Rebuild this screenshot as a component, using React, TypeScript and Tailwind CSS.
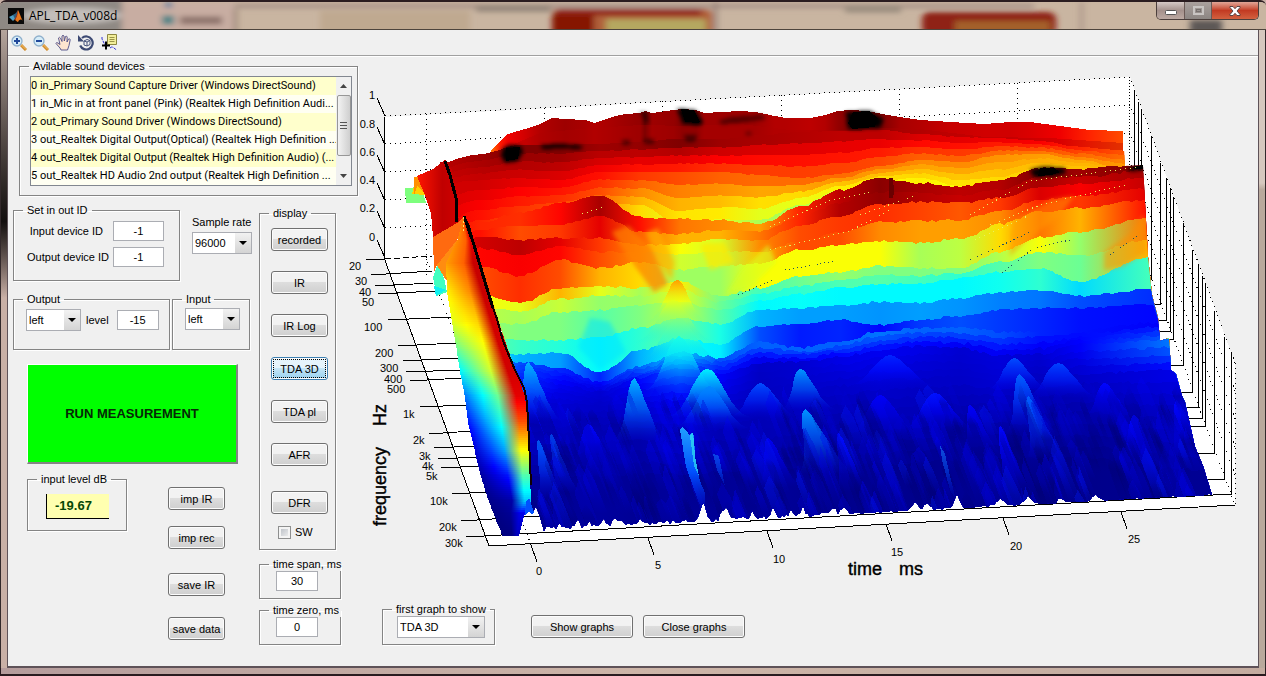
import { useState, type ReactNode } from 'react';
import clsx from 'clsx';

/* ---------- 3D plot data ---------- */

type Ridge = { y: number[]; v: number[]; end: number };
type Point = [number, number];

// x knots shared by every ridge, the last one is replaced by ridge.end
const KNOTS = [440, 480, 520, 560, 600, 640, 680, 720, 760, 800, 840, 880, 920, 960, 1000, 1040, 1080];

const clamp = (n: number) => Math.max(0, Math.min(1, n));

// jet colormap, values above 1 fade to black
function jet(v: number) {
  const dark = v > 1 ? clamp(1 - (v - 1) * 10) : 1;
  const t = Math.min(v, 1);
  const c = [3, 2, 1].map((k) => Math.round(255 * dark * clamp(1.5 - Math.abs(4 * t - k))));
  return `rgb(${c.join(',')})`;
}

function makeRandom(seed: number) {
  let s = seed;
  return () => {
    s = (s * 16807) % 2147483647;
    return s / 2147483647;
  };
}

const BACK: Ridge[] = [
  { end: 1125, y: [162, 154, 145, 145, 144, 142, 139, 139, 135, 132, 131, 130, 134, 137, 138, 141, 147, 151], v: [0.94, 0.97, 1, 1, 0.97, 0.98, 1, 0.97, 0.96, 0.95, 0.94, 0.94, 0.91, 0.9, 0.89, 0.88, 0.84, 0.79] },
  { end: 1125, y: [185, 180, 178, 180, 172, 172, 172, 172, 175, 178, 174, 166, 160, 162, 155, 154, 160, 168], v: [0.92, 0.92, 0.9, 0.88, 0.86, 0.82, 0.8, 0.78, 0.77, 0.77, 0.77, 0.76, 0.74, 0.74, 0.73, 0.72, 0.71, 0.7] },
  { end: 1127, y: [235, 220, 215, 210, 203, 205, 224, 219, 220, 205, 190, 180, 178, 186, 184, 172, 172, 170], v: [0.88, 0.84, 0.8, 0.78, 0.74, 0.66, 0.6, 0.6, 0.54, 0.55, 0.6, 0.62, 0.64, 0.62, 0.64, 0.66, 0.66, 0.7] },
];

const MIDDLE: Ridge[] = [
  { end: 1143, y: [240, 222, 213, 203, 196, 217, 219, 220, 224, 207, 190, 178, 183, 186, 180, 168, 169, 165], v: [0.88, 0.84, 0.83, 0.87, 0.96, 0.86, 0.76, 0.74, 0.72, 0.84, 0.94, 0.99, 0.96, 0.94, 0.95, 1, 0.97, 1] },
  { end: 1143, y: [248, 230, 226, 225, 216, 232, 234, 230, 231, 217, 203, 192, 193, 195, 190, 177, 177, 171], v: [0.87, 0.86, 0.8, 0.82, 0.9, 0.78, 0.7, 0.7, 0.76, 0.84, 0.95, 0.98, 0.95, 0.93, 0.94, 0.96, 0.93, 0.96] },
  { end: 1144, y: [255, 237, 240, 238, 238, 245, 244, 239, 240, 226, 216, 204, 202, 203, 198, 187, 184, 178], v: [0.88, 0.92, 0.94, 0.9, 0.82, 0.74, 0.62, 0.58, 0.74, 0.8, 0.82, 0.83, 0.81, 0.79, 0.82, 0.91, 0.88, 0.93] },
  { end: 1145, y: [263, 248, 255, 246, 252, 252, 254, 252, 252, 241, 232, 222, 221, 220, 211, 200, 196, 189], v: [0.82, 0.87, 0.88, 0.87, 0.8, 0.74, 0.58, 0.56, 0.69, 0.8, 0.8, 0.74, 0.72, 0.72, 0.74, 0.84, 0.82, 0.9] },
  { end: 1146, y: [274, 266, 276, 260, 268, 262, 270, 266, 264, 250, 245, 241, 243, 239, 224, 212, 208, 200], v: [0.78, 0.8, 0.83, 0.8, 0.7, 0.66, 0.53, 0.53, 0.62, 0.62, 0.62, 0.62, 0.54, 0.56, 0.66, 0.76, 0.7, 0.86] },
  { end: 1147, y: [290, 294, 303, 288, 286, 288, 281, 296, 288, 276, 272, 266, 268, 268, 252, 237, 232, 218], v: [0.64, 0.62, 0.6, 0.7, 0.6, 0.54, 0.64, 0.49, 0.44, 0.48, 0.52, 0.5, 0.5, 0.5, 0.55, 0.62, 0.52, 0.76] },
  { end: 1147, y: [304, 306, 312, 299, 296, 296, 290, 302, 294, 286, 280, 275, 276, 273, 262, 252, 256, 240], v: [0.58, 0.56, 0.54, 0.57, 0.52, 0.53, 0.6, 0.48, 0.4, 0.42, 0.45, 0.46, 0.44, 0.42, 0.46, 0.5, 0.48, 0.7] },
  { end: 1148, y: [320, 322, 324, 312, 310, 305, 302, 310, 301, 294, 288, 284, 284, 278, 272, 268, 282, 257], v: [0.55, 0.53, 0.5, 0.5, 0.46, 0.5, 0.57, 0.46, 0.37, 0.38, 0.37, 0.37, 0.37, 0.37, 0.39, 0.42, 0.34, 0.44] },
  { end: 1151, y: [334, 337, 340, 340, 337, 328, 318, 324, 310, 308, 305, 302, 303, 298, 292, 290, 296, 289], v: [0.5, 0.48, 0.43, 0.41, 0.37, 0.42, 0.48, 0.4, 0.3, 0.28, 0.28, 0.27, 0.28, 0.27, 0.25, 0.24, 0.2, 0.17] },
  { end: 1153, y: [346, 354, 354, 352, 373, 350, 338, 344, 326, 324, 320, 325, 320, 316, 310, 308, 308, 304], v: [0.4, 0.38, 0.3, 0.28, 0.16, 0.3, 0.38, 0.36, 0.2, 0.15, 0.16, 0.13, 0.18, 0.2, 0.18, 0.16, 0.14, 0.13] },
];

const FRONT: Ridge[] = [
  { end: 1158, y: [360, 366, 362, 368, 382, 366, 352, 358, 342, 348, 342, 331, 328, 328, 332, 332, 330, 322], v: [0.32, 0.3, 0.2, 0.16, 0.12, 0.22, 0.32, 0.2, 0.22, 0.22, 0.22, 0.24, 0.22, 0.22, 0.2, 0.16, 0.14, 0.12] },
  { end: 1169, y: [375, 380, 376, 384, 392, 378, 368, 374, 363, 362, 357, 350, 346, 348, 356, 354, 344, 340], v: [0.28, 0.24, 0.16, 0.11, 0.08, 0.13, 0.2, 0.12, 0.07, 0.08, 0.1, 0.11, 0.1, 0.08, 0.09, 0.08, 0.12, 0.24] },
  { end: 1174, y: [400, 402, 398, 404, 405, 402, 400, 402, 396, 392, 386, 380, 378, 376, 382, 380, 374, 370], v: [0.18, 0.15, 0.1, 0.08, 0.07, 0.08, 0.12, 0.08, 0.06, 0.07, 0.07, 0.08, 0.07, 0.07, 0.08, 0.06, 0.07, 0.1] },
  { end: 1190, y: [430, 432, 430, 434, 430, 428, 432, 430, 428, 424, 424, 418, 416, 414, 410, 414, 412, 418], v: [0.1, 0.09, 0.07, 0.06, 0.05, 0.05, 0.08, 0.05, 0.05, 0.06, 0.04, 0.05, 0.05, 0.04, 0.05, 0.03, 0.04, 0.06] },
  { end: 1204, y: [480, 478, 476, 476, 476, 474, 474, 472, 470, 468, 466, 464, 462, 460, 458, 458, 458, 470], v: [0.05, 0.04, 0.03, 0.02, 0.03, 0.02, 0.03, 0.02, 0.03, 0.02, 0.01, 0.02, 0.01, 0.02, 0.01, 0, 0.01, 0.02] },
];

// Outline of the very first ridge
const TOP_LINE: [number, number, number][] = [
  [485, 158, 0.74], [491, 151, 0.76], [500, 141, 0.85], [508, 134, 0.89], [525, 129, 0.92], [540, 124, 0.95],
  [552, 118, 0.96], [565, 119, 0.97], [585, 120, 0.96], [594, 123, 0.95], [612, 117, 0.96], [625, 114, 0.97],
  [640, 113, 0.98], [645, 111, 1.02], [652, 113, 0.97], [674, 110, 0.98], [682, 109, 1], [696, 110, 1],
  [704, 113, 0.97], [740, 111, 0.97], [755, 112, 0.97], [775, 116, 0.95], [785, 118, 0.95], [810, 118, 0.94],
  [825, 115, 0.95], [838, 111, 0.98], [850, 110, 1], [868, 111, 1], [882, 114, 1], [900, 117, 0.96],
  [920, 120, 0.95], [950, 122, 0.93], [985, 124, 0.92], [1010, 122, 0.92], [1030, 122, 0.91], [1060, 126, 0.89],
  [1090, 130, 0.84], [1123, 131, 0.8],
];

function mixRidge(a: Ridge, b: Ridge, t: number): Ridge {
  const mix = (p: number, q: number) => p + (q - p) * t;
  return { end: mix(a.end, b.end), y: a.y.map((p, i) => mix(p, b.y[i])), v: a.v.map((p, i) => mix(p, b.v[i])) };
}

function expand(ridges: Ridge[], steps: number) {
  return ridges.flatMap((ridge, i) =>
    i === ridges.length - 1
      ? [ridge]
      : Array.from({ length: steps }, (_, k) => mixRidge(ridge, ridges[i + 1], k / steps)),
  );
}

function ridgePoints(ridge: Ridge, roughness: number, seed: number) {
  const random = makeRandom(seed);
  const xs = [...KNOTS, ridge.end];
  const points: Point[] = [];
  for (let i = 0; i < xs.length - 1; i++) {
    for (let x = xs[i]; x < xs[i + 1]; x += 4) {
      const t = (x - xs[i]) / (xs[i + 1] - xs[i]);
      const s = t * t * (3 - 2 * t);
      points.push([x, Math.round(ridge.y[i] + (ridge.y[i + 1] - ridge.y[i]) * s + (random() - 0.5) * roughness)]);
    }
  }
  points.push([ridge.end, ridge.y[ridge.y.length - 1]]);
  return points;
}

const toText = (points: Point[]) => points.map((p) => p.join(',')).join(' ');

function RidgeShape({ ridge, id, roughness = 1 }: { ridge: Ridge; id: string; roughness?: number }) {
  const xs = [...KNOTS, ridge.end];
  const points = ridgePoints(ridge, roughness, id.length * 131 + Math.round(ridge.y[3] * 7));
  return (
    <>
      <linearGradient id={id} gradientUnits="userSpaceOnUse" x1="440" x2={ridge.end}>
        {xs.map((x, i) => (
          <stop key={x} offset={(x - 440) / (ridge.end - 440)} stopColor={jet(ridge.v[i])} />
        ))}
      </linearGradient>
      <polygon points={`${toText(points)} 1230,540 440,540`} fill={`url(#${id})`} />
    </>
  );
}

// y, left x, right x, then the level at the left, middle and right
const SLOPE = [
  [218, 463, 465, 0.75, 0.8, 0.9],
  [240, 457, 473, 0.74, 0.78, 0.9],
  [262, 446, 478, 0.72, 0.78, 0.93],
  [290, 447, 488, 0.64, 0.74, 0.93],
  [320, 452, 498, 0.6, 0.67, 0.92],
  [343, 456, 506, 0.5, 0.62, 0.92],
  [370, 460, 516, 0.37, 0.58, 0.92],
  [395, 465, 525, 0.24, 0.48, 0.9],
  [420, 468, 528, 0.15, 0.4, 0.8],
  [450, 475, 529, 0.08, 0.28, 0.62],
  [475, 481, 530, 0.03, 0.14, 0.45],
  [500, 489, 531, 0.01, 0.04, 0.32],
  [513, 494, 524, 0, 0.02, 0.1],
  [535, 503, 519, 0, 0, 0.06],
];

function Slope() {
  const strips: number[][] = [];
  for (let i = 0; i < SLOPE.length - 1; i++) {
    const a = SLOPE[i];
    const b = SLOPE[i + 1];
    for (let y = a[0]; y < b[0]; y += 2) {
      const t = (y - a[0]) / (b[0] - a[0]);
      strips.push(a.map((n, k) => n + (b[k] - n) * t));
    }
  }
  return (
    <>
      {strips.map(([y, x1, x2, left, middle, right]) => (
        <g key={y}>
          <linearGradient id={`slope${Math.round(y)}`}>
            <stop offset="0" stopColor={jet(left)} />
            <stop offset=".3" stopColor={jet(left + (middle - left) * 0.55)} />
            <stop offset=".55" stopColor={jet(middle)} />
            <stop offset=".85" stopColor={jet(right)} />
            <stop offset="1" stopColor={jet(right)} />
          </linearGradient>
          <rect x={x1} y={y} width={x2 - x1} height="3" fill={`url(#slope${Math.round(y)})`} />
        </g>
      ))}
    </>
  );
}

// peak x, peak y, half width, height, level, lean
const HUMPS = [
  [677, 280, 34, 44, 0.72, 0], [673, 300, 44, 44, 0.6, 2], [678, 318, 46, 44, 0.5, 2], [679, 336, 40, 56, 0.4, 2],
  [528, 362, 26, 60, 0.3, 10], [634, 378, 28, 64, 0.3, 6], [707, 369, 46, 50, 0.36, 2], [709, 386, 42, 44, 0.26, 2],
  [760, 383, 40, 36, 0.2, 4], [800, 369, 30, 42, 0.27, 8], [890, 355, 52, 34, 0.16, 2], [805, 409, 30, 66, 0.27, 22],
  [935, 393, 44, 40, 0.14, 4], [880, 395, 40, 40, 0.12, 4], [1014, 358, 36, 34, 0.2, 4], [1019, 374, 28, 60, 0.22, 12],
  [1058, 363, 42, 36, 0.19, 4], [1028, 396, 22, 64, 0.22, 20], [1104, 383, 30, 36, 0.13, 6], [1134, 415, 24, 50, 0.13, 6],
  [551, 434, 14, 60, 0.2, 16], [538, 440, 14, 60, 0.22, 14], [1176, 400, 22, 60, 0.13, 14],
  [768, 438, 24, 50, 0.11, 12], [838, 433, 18, 60, 0.13, 16], [1000, 426, 18, 70, 0.13, 18],
  [588, 424, 26, 40, 0.13, 6], [970, 405, 22, 50, 0.12, 12],
];

function Hump({ hump, index }: { hump: number[]; index: number }) {
  const [x, y, half, height, level, lean] = hump;
  const side = (sign: number) =>
    Array.from({ length: 13 }, (_, k): Point => {
      const t = k / 12;
      const drop = 1 - Math.exp(-4 * t * t);
      return [Math.round(x + sign * half * t + lean * drop), Math.round(y + height * drop)];
    });
  return (
    <>
      <linearGradient id={`hump${index}`} x2="0" y2="1">
        <stop offset="0" stopColor={jet(level)} />
        <stop offset=".5" stopColor={jet(level * 0.85)} stopOpacity=".6" />
        <stop offset="1" stopColor={jet(level * 0.6)} stopOpacity="0" />
      </linearGradient>
      <polygon points={toText([...side(-1).reverse(), ...side(1)])} fill={`url(#hump${index})`} />
    </>
  );
}

// Narrow leaning peaks of the high frequency noise
function Streaks() {
  const random = makeRandom(4177);
  const items = Array.from({ length: 420 }, (_, i) => {
    const x = 525 + random() * 665;
    const y = 392 + random() * 115 - (x - 530) * 0.03;
    const h = 22 + random() * 46;
    const w = 1 + random() * 4;
    return { i, x, y, h, w, tone: random() };
  });
  return (
    <>
      {['#0018ff', '#0000f0', '#0000d0', '#000070'].map((color, i) => (
        <linearGradient key={color} id={`streak${i}`} x2="0" y2="1">
          <stop offset="0" stopColor={color} stopOpacity={i === 3 ? 0 : 0.35} />
          <stop offset=".4" stopColor={color} stopOpacity=".3" />
          <stop offset="1" stopColor={color} stopOpacity="0" />
        </linearGradient>
      ))}
      {items.map(({ i, x, y, h, w, tone }) => (
        <polygon
          key={i}
          points={`${x},${y} ${x + w + h * 0.08},${y + h * 0.3} ${x + w + h * 0.36},${y + h} ${x - w + h * 0.28},${y + h} ${x - w},${y + h * 0.25}`}
          fill={`url(#streak${tone > 0.94 ? 0 : tone > 0.76 ? 1 : tone > 0.42 ? 2 : 3})`}
        />
      ))}
    </>
  );
}

const NOTCHES = [
  [703, 21, 12], [725, 12, 14], [753, 7, 10], [773, 9, 10], [791, 7, 7], [803, 8, 8], [833, 7, 10], [844, 7, 10],
  [915, 9, 12], [927, 8, 12], [957, 14, 12], [1000, 8, 14], [1028, 9, 16], [1061, 5, 12], [1096, 6, 14],
  [577, 9, 8], [590, 5, 8], [604, 6, 8], [615, 8, 8], [621, 7, 8], [560, 4, 8], [640, 4, 8],
];

// Teeth along the front edge, from left to right
function frontEdge() {
  const random = makeRandom(91);
  const points: Point[] = [[533, 512], [536, 506], [540, 517]];
  for (let x = 544; x < 1212; x += 2) {
    const base = 530.5 - (x - 547) * 0.0525;
    const notch = NOTCHES.find(([nx, , width]) => Math.abs(x - nx) < width / 2);
    const depth = notch ? notch[1] * (1 - Math.abs(x - notch[0]) / (notch[2] / 2)) : 0;
    points.push([x, Math.round(base - depth - random() * (x < 860 ? 4 : 2))]);
  }
  return points;
}

const SURFACE_CLIP = toText([
  [418, 60], [1123, 60], [1123, 131], [1125, 166], [1143, 165], [1148, 257], [1152, 295], [1158, 318], [1160, 341],
  [1169, 338], [1171, 370], [1176, 374], [1182, 396], [1185, 402], [1190, 425], [1195, 447], [1203, 466], [1212, 495],
  ...frontEdge().reverse(),
  [528, 500], [515, 370], [464, 216], [458, 222], [418, 177],
]);

const Z_TICKS: [string, number][] = [['1', 98], ['0.8', 127], ['0.6', 155], ['0.4', 183], ['0.2', 211], ['0', 240]];

// label, label x, label baseline, tick x1, y1, x2, y2
const FREQUENCY_TICKS: [string, number, number, number, number, number, number][] = [
  ['20', 349, 270, 366, 260, 385, 259], ['30', 355, 285, 371, 275, 432, 271], ['40', 359, 296, 375, 286, 433, 283],
  ['50', 362, 306, 378, 294, 435, 291], ['100', 364, 331, 388, 320, 452, 317], ['200', 375, 357, 398, 346, 456, 343],
  ['300', 380, 372, 403, 361, 459, 358], ['400', 384, 383, 406, 372, 460, 370], ['500', 387, 393, 410, 381, 462, 378],
  ['1k', 403, 418, 420, 407, 466, 405], ['2k', 413, 444, 429, 434, 472, 431], ['3k', 419, 460, 434, 448, 475, 446],
  ['4k', 422, 470, 438, 459, 478, 457], ['5k', 426, 480, 441, 468, 481, 466], ['10k', 430, 505, 452, 494, 489, 492],
  ['20k', 439, 531, 461, 521, 540, 516], ['30k', 445, 547, 466, 537, 1231, 494],
];

const TIME_TICKS: [string, number, number, number, number][] = [
  ['0', 531, 545, 536, 575], ['5', 648, 538, 655, 569], ['10', 767, 531, 773, 563],
  ['15', 886, 524, 891, 556], ['20', 1003, 518, 1010, 550], ['25', 1121, 512, 1128, 543],
];

// Grid lines of the right wall: x, top, bottom, length of the floor stub
const WALL_LINES = [
  [1134, 91, 166, 0], [1138, 102, 166, 0], [1141, 110, 165, 0], [1151, 136, 279, 4], [1160, 163, 304, 10],
  [1166, 178, 320, 12], [1170, 188, 331, 12], [1173, 197, 339, 10], [1183, 223, 365, 14], [1192, 250, 392, 12],
  [1198, 265, 407, 14], [1202, 276, 418, 16], [1205, 284, 426, 16], [1214, 311, 453, 18], [1224, 337, 479, 18],
  [1231, 352, 494, 18],
];

function SurfacePlot() {
  return (
    <svg
      viewBox="358 57 900 542"
      className="block h-auto w-full overflow-visible font-['Liberation_Sans',Arial,sans-serif]"
      shapeRendering="crispEdges"
      role="img"
      aria-label="TDA 3D surface, frequency against time"
    >
      <polygon points="384,117 1130,77 1235,363 1235,505 489,546 384,259" fill="#fff" />

      {/* grid */}
      <g stroke="#000" fill="none">
        <g strokeDasharray="1 4">
          {[0, 28, 56, 84, 112].map((d) => (
            <path key={d} d={`M385 ${116 + d}L1130 ${77 + d}L1235 ${363 + d}`} />
          ))}
          {[426, 544, 662, 781, 899, 1017].map((x) => (
            <path key={x} d={`M${x} ${114 - (x - 426) * 0.053}V275`} />
          ))}
          <path d="M1235 363V505M426 257L531 545M1130 219L1235 505" />
        </g>
        <path d="M1129.500 77V166" strokeDasharray="1 2" />
        <path d="M385 259L432 256" strokeDasharray="6 3" />
        {WALL_LINES.map(([x, top, bottom, stub]) => (
          <path key={x} d={`M${x + 0.5} ${top}V${bottom}h${-stub}`} />
        ))}
        <path d="M384.500 117V259L489 546L1235 505" />
        {Z_TICKS.map(([label, y]) => (
          <path key={label} d={`M377 ${y}L385 ${y + 18}`} />
        ))}
        {FREQUENCY_TICKS.map(([label, , , x1, y1, x2, y2]) => (
          <path key={label} d={`M${x1} ${y1}L${x2} ${y2}`} />
        ))}
        {TIME_TICKS.map(([label, x, y]) => (
          <path key={label} d={`M${x} ${y}l6 17`} />
        ))}
      </g>

      {/* surface for time above zero */}
      <clipPath id="surface">
        <polygon points={SURFACE_CLIP} />
      </clipPath>
      <filter id="soft" x="-20%" y="-20%" width="140%" height="140%">
        <feGaussianBlur stdDeviation="2" />
      </filter>
      <g clipPath="url(#surface)">
        <linearGradient id="top" gradientUnits="userSpaceOnUse" x1="485" x2="1123">
          {TOP_LINE.map(([x, , v]) => (
            <stop key={x} offset={(x - 485) / 638} stopColor={jet(v)} />
          ))}
        </linearGradient>
        <polygon points={`${toText(TOP_LINE.map(([x, y]): Point => [x, y]))} 1123,250 485,250`} fill="url(#top)" />
        {/* second shade just under the crest */}
        <path
          d="M500 150L540 133L580 129L640 125L690 126L740 124L790 130L840 130L880 128L920 129L985 137L1050 138L1123 143V200H500z"
          fill="#b00000"
          fillOpacity=".35"
        />
        {expand(BACK, 4).map((ridge, i) => (
          <RidgeShape key={i} ridge={ridge} id={`back${i}`} />
        ))}
        <path d="M503 148l6-3 12 1 2 6-5 9-13 2-4-7z M541 145l20-1 22 2-2 3-20-1-19 1z" filter="url(#soft)" />
        <path d="M506 148l14-1-2 12-12 2z" />
        <path d="M677 109l18 1 8 12-2 3-18-1-3-8z M846 112l24-1 14 8-4 9-32 1z" filter="url(#soft)" />
        <path d="M681 109l13 1 6 12-2 1-13-1z M853 112l16-1 9 7-3 9-23 2-4-6z" />
        <g filter="url(#soft)" opacity=".5">
          <path d="M638 112l9 0 2 11-4-1-2-6z M684 135h13l-2 7h-9z M644 139h10v5h-10z M622 140h8v5h-8z" />
          <path d="M718 121l14-4 30-2 4 4-20 3-24 2z M746 132h5v3h-5z" />
        </g>
        {MIDDLE.map((ridge, i) => (
          <RidgeShape key={i} ridge={ridge} id={`middle${i}`} roughness={2} />
        ))}
        {/* folds running down from the warm crests */}
        <g filter="url(#soft)">
          <path d="M612 232L628 226L652 250L668 284L654 292L636 268z" fill="#ff8000" fillOpacity=".7" />
          <path d="M646 232l12-4 16 34-2 18-12-14z" fill="#ffb400" fillOpacity=".6" />
          <path d="M700 244l24-2 10 20-24 8z" fill="#ffe800" fillOpacity=".7" />
          <path d="M768 244l-26 26-16 24 26-8 24-24z" fill="#d8ff20" fillOpacity=".6" />
          <path d="M1012 222l38-22 24-4-14 20-36 26-14 14z" fill="#ff9800" fillOpacity=".5" />
          <path d="M1104 252l26-18 14-20 2 38-22 14-20 4z" fill="#ff9000" fillOpacity=".5" />
          <path d="M590 318l20 4 16 30-26 18-22-22z" fill="#00e4ff" fillOpacity=".5" />
        </g>
        <path d="M889 178h4l1 14-1 6h-4z" fill="#6a0000" />
        <g filter="url(#soft)">
          <path d="M1030 170l12-3 22 1 2 5-14 3-18 1z M1126 168l18-3v5l-14 1z" />
        </g>
        <path d="M1040 168l14 0 6 4-8 3-14 1z M1132 167l11-2v4l-8 0z" />
        {expand(FRONT, 4).map((ridge, i) => (
          <RidgeShape key={i} ridge={ridge} id={`front${i}`} roughness={3} />
        ))}
        {HUMPS.map((hump, i) => (
          <Hump key={i} hump={hump} index={i} />
        ))}
        <Streaks />
        <linearGradient id="spike" x2="0" y2="1">
          <stop offset="0" stopColor="#20a0ff" />
          <stop offset=".5" stopColor="#0050ff" />
          <stop offset="1" stopColor="#0000c0" stopOpacity=".3" />
        </linearGradient>
        <path d="M680 430l2-3 6 5 1 4 3-4 2 4 1 20 5 25 5 12 0 24-6-14-13-36z" fill="url(#spike)" />
        <path d="M690 436l3-4 2 24 4 20-5-10z" fill="#30e0f0" fillOpacity=".7" />
        <path d="M940 445l5 9 6 26 5 20-6-10-8-30z M713 454l6 2 6 30-8-16z" fill="url(#spike)" opacity=".5" />

        {/* specks along the steep faces */}
        <g fill="none" stroke="#e8f060" strokeDasharray="1 4">
          <path d="M770 227L830 200L870 192M770 250L850 231L890 210M860 215L920 194" />
          <path d="M970 215L1030 181L1140 167M990 225L1040 205L1125 185M975 240L1030 215M582 214L606 206" />
        </g>
        <g fill="none" stroke="#205060" strokeDasharray="1 3">
          <path d="M970 260L1030 232M1002 273L1034 248L1070 240M738 295L775 279M785 270L835 261M1110 255L1140 234" />
        </g>
      </g>

      {/* surface for time below zero */}
      <path d="M405 188h8l6-10 7 25h-20z" fill="#7dff7d" />
      <path d="M412 194l4-16 6 8 4 9z" fill="#ffd000" />
      <path d="M414 177l4 0 8 18-9-9-3 10z" fill="#ff9000" />
      <linearGradient id="ledge">
        <stop offset="0" stopColor="#ff1500" />
        <stop offset=".6" stopColor="#c00000" />
        <stop offset="1" stopColor="#d00000" />
      </linearGradient>
      <path d="M417 176L433 169L441 163L445 159L452 170L459 222L433 237L431 213L424 193z" fill="url(#ledge)" />
      <path d="M433 237L457 223L463 218L461 232L452 250L437 265L434 272z" fill="#ff6a10" />
      <path d="M438 262l6 16 3 14-10 4-4-18z" fill="#40ffc0" />
      <path d="M434 286l12 4-10 6z" fill="#10f0f0" />
      <path d="M437 265L457 240L450 280L446 280z" fill="#ff8c10" />
      <Slope />
      <path d="M525 515l1-13 3-4 5 14-2 2-3-2z" fill="#0050ff" />
      <path d="M445 161L450 175L456 198L457 222" fill="none" stroke="#000" strokeWidth="3" />
      <path
        d="M464 216L469 226L474 245L485 282L492 305L497 319L503 341L515 370L524 388L527 402L529 440L531 485"
        fill="none"
        stroke="#100000"
        strokeWidth="2"
      />
      <path d="M464 216L474 245L485 282L493 308" fill="none" stroke="#000" strokeWidth="3" />
      <path d="M463 217v15" stroke="#ffe060" strokeDasharray="2 2" />

      {/* labels */}
      <g fontSize="11" shapeRendering="auto">
        {Z_TICKS.map(([label, y]) => (
          <text key={label} x="375" y={y + 1} textAnchor="end">
            {label}
          </text>
        ))}
        {FREQUENCY_TICKS.map(([label, x, y]) => (
          <text key={label} x={x} y={y}>
            {label}
          </text>
        ))}
        {TIME_TICKS.map(([label, , , x, y]) => (
          <text key={label} x={x} y={y}>
            {label}
          </text>
        ))}
      </g>
      <g fontSize="18" stroke="#000" strokeWidth=".4">
        <text x="848" y="575">time</text>
        <text x="899" y="575">ms</text>
        <text transform="translate(386 526) rotate(-90)">frequency</text>
        <text transform="translate(386 426) rotate(-90)">Hz</text>
      </g>
    </svg>
  );
}

/* ---------- controls ---------- */

function Panel({ title, className, children }: { title: string; className?: string; children?: ReactNode }) {
  return (
    <fieldset className={clsx('min-w-0 border border-[#848484] shadow-[1px_1px_0_#fff,inset_1px_1px_0_#fff]', className)}>
      <legend className="ml-[9px] px-1 leading-[14px] whitespace-nowrap">{title}</legend>
      {children}
    </fieldset>
  );
}

function PushButton({ label, active, className, onClick }: { label: string; active?: boolean; className?: string; onClick?: () => void }) {
  return (
    <button
      type="button"
      onClick={onClick}
      className={clsx(
        'h-[23px] rounded-[3px] border whitespace-nowrap shadow-[inset_0_0_0_1px_#fcfcfc]',
        active
          ? 'border-[#3c7fb1] bg-linear-to-b from-[#e5f4fc] from-45% via-[#c4e5f6] via-50% to-[#98d1ef] outline-1 -outline-offset-3 outline-dotted outline-black'
          : 'border-[#707070] bg-linear-to-b from-[#f2f2f2] from-45% via-[#dddddd] via-50% to-[#cfcfcf]',
        className,
      )}
    >
      {label}
    </button>
  );
}

function DropDown({ label, options, className }: { label: string; options: string[]; className?: string }) {
  return (
    <span className={clsx('relative inline-flex h-[22px] border border-[#abadb3] bg-white', className)}>
      <select aria-label={label} className="w-full appearance-none bg-transparent pl-[2px] outline-none">
        {options.map((option) => (
          <option key={option}>{option}</option>
        ))}
      </select>
      <span className="pointer-events-none absolute inset-y-0 right-0 grid w-[16px] place-items-center bg-linear-to-b from-[#f2f2f2] to-[#d4d4d4]">
        <svg viewBox="0 0 8 4" className="h-1 w-2">
          <path d="M0 0h8L4 4z" />
        </svg>
      </span>
    </span>
  );
}

function NumberBox({ id, label, value, className }: { id: string; label?: string; value: string; className?: string }) {
  return (
    <input
      id={id}
      aria-label={label}
      defaultValue={value}
      className={clsx('h-[20px] border border-[#abadb3] bg-white text-center outline-none', className)}
    />
  );
}

const DEVICES = [
  '0 in_Primary Sound Capture Driver (Windows DirectSound)',
  '1 in_Mic in at front panel (Pink) (Realtek High Definition Audi...',
  '2 out_Primary Sound Driver (Windows DirectSound)',
  '3 out_Realtek Digital Output(Optical) (Realtek High Definition ...',
  '4 out_Realtek Digital Output (Realtek High Definition Audio) (...',
  '5 out_Realtek HD Audio 2nd output (Realtek High Definition ...',
];

function DeviceList() {
  return (
    <div className="mt-[3px] mr-[5px] ml-[10px] flex h-[110px] border border-[#828790] bg-white">
      <ul className="min-w-0 flex-1 overflow-hidden font-['Roboto','Liberation_Sans',sans-serif]">
        {DEVICES.map((device) => (
          <li key={device} className="h-[18px] leading-[18px] whitespace-nowrap odd:bg-[#ffffcc] even:bg-[#fffff2]">
            {device}
          </li>
        ))}
      </ul>
      <div className="flex w-[15px] flex-col items-center bg-[#f0f0f0]">
        <svg viewBox="0 0 7 4" className="my-[7px] h-1 w-[7px]">
          <path d="M0 4h7L3.500 0z" fill="#444" />
        </svg>
        <div className="grid h-[61px] w-[14px] place-items-center rounded-[2px] border border-[#979797] bg-linear-to-r from-[#f3f3f3] to-[#cfcfcf]">
          <div className="flex flex-col gap-[2px]">
            <i className="block h-px w-[7px] bg-[#555]" />
            <i className="block h-px w-[7px] bg-[#555]" />
            <i className="block h-px w-[7px] bg-[#555]" />
          </div>
        </div>
        <svg viewBox="0 0 7 4" className="mt-auto mb-[7px] h-1 w-[7px]">
          <path d="M0 0h7L3.500 4z" fill="#444" />
        </svg>
      </div>
    </div>
  );
}

/* ---------- window chrome ---------- */

// Blurred desktop behind the glass title bar
function GlassBackdrop() {
  return (
    <svg viewBox="0 0 1266 30" preserveAspectRatio="none" className="absolute inset-0 -z-10 h-full w-full">
      <filter id="glass" x="-10%" width="120%" y="-50%" height="200%">
        <feGaussianBlur stdDeviation="3" />
      </filter>
      <rect width="1266" height="30" fill="#c9b5a1" />
      <g filter="url(#glass)">
        <rect x="-10" y="-5" width="132" height="45" fill="#8f8984" />
        <ellipse cx="72" cy="15" rx="50" ry="9" fill="#c3beba" />
        <rect x="122" width="112" height="40" fill="#c8ada2" />
        <rect x="162" y="15" width="12" height="10" fill="#4d8487" />
        <rect x="165" y="0" width="7" height="6" fill="#5d7fa0" />
        <rect x="180" y="16" width="42" height="9" fill="#8f756d" />
        <rect x="234" y="8" width="3" height="30" fill="#8f7a6a" />
        <rect x="234" y="2" width="800" height="5" fill="#a89388" />
        <rect x="476" y="4" width="75" height="7" fill="#95877a" />
        <rect x="320" y="10" width="150" height="26" fill="#bfa990" />
        <rect x="552" y="8" width="160" height="30" rx="6" fill="#b0603a" />
        <rect x="552" y="10" width="42" height="30" rx="8" fill="#861505" />
        <rect x="556" y="8" width="146" height="7" rx="4" fill="#912414" />
        <rect x="606" y="19" width="100" height="20" fill="#b5a860" />
        <rect x="714" y="0" width="3" height="40" fill="#8c7470" />
        <rect x="845" y="4" width="56" height="8" fill="#9c8f80" />
        <rect x="922" y="11" width="134" height="26" rx="8" fill="#8f2413" />
        <rect x="955" y="21" width="95" height="14" fill="#a4602c" />
        <rect x="1080" y="0" width="3" height="40" fill="#a58f84" />
        <rect x="1190" y="20" width="32" height="16" fill="#5d5957" />
      </g>
    </svg>
  );
}

function MatlabIcon() {
  return (
    <svg viewBox="0 0 16 16" className="h-4 w-4">
      <rect width="16" height="16" fill="#0a0a0a" />
      <path d="M1 9l4-2 3-1 2 3-4 3-1 1z" fill="#4f9fc4" />
      <path d="M5 7l3-2 2-3-1 5-2 4z" fill="#2c5f80" />
      <path d="M10 2c1 1 3 8 5 11-2-2-3-2-5 1-1 0-1-1-3-2 2-2 2-7 3-10z" fill="#e8761c" />
      <path d="M10 2c0 4-1 7-3 10l-1 0c2-3 3-6 4-10z" fill="#9c2a10" />
    </svg>
  );
}

function ZoomIcon({ plus }: { plus?: boolean }) {
  return (
    <svg viewBox="0 0 16 16" className="h-4 w-4">
      <path d="M10 10l5 5" stroke="#d08a2c" strokeWidth="3" />
      <path d="M10 9.500l5 5" stroke="#f5c46a" strokeWidth="1" />
      <circle cx="6" cy="6" r="5" fill="#d6ecf8" stroke="#8fb0cc" strokeWidth="1.300" />
      <path d={plus ? 'M3 6h6M6 3v6' : 'M3 6h6'} stroke="#20489a" strokeWidth="2" />
    </svg>
  );
}

function PanIcon() {
  return (
    <svg viewBox="0 0 17 17" className="h-[17px] w-[17px]">
      <path
        d="M5 14L1 9.500q0-1.500 2-.5l2 1.500L3.500 4q1-1.500 2 .2L7 7.500V2q1-1.500 2 0l.3 5 1.200-4.500q1.200-1 1.700.5L12 8l1.500-3q1.500-.7 1.700.8L14 11.500 12.500 16H6z"
        fill="#fde5cf"
        stroke="#4c4c86"
        strokeWidth=".9"
      />
    </svg>
  );
}

function RotateIcon() {
  return (
    <svg viewBox="0 0 17 17" className="h-[17px] w-[17px]" fill="none">
      <path d="M4 4a6.500 6.500 0 1 1-1.800 7.500" stroke="#3d4a73" strokeWidth="2.200" />
      <path d="M0 1v6.500h6z" fill="#3d4a73" />
      <path d="M6 7l3-1.500 3 1v4L9 12l-3-1zM6 7l3 1 3-1.500M9 8v4" stroke="#45527c" />
    </svg>
  );
}

function CursorIcon() {
  return (
    <svg viewBox="0 0 17 17" className="h-[17px] w-[17px]" fill="none">
      <path d="M1 3v2l3 6M9 14q2-2 4 0t3 1.500" stroke="#3030d0" strokeDasharray="3 1" />
      <path d="M6.500.5h9v10h-9z" fill="#f2ee9a" stroke="#8e8840" />
      <path d="M8.500 3.500h5M8.500 5.500h5M8.500 7.500h5" stroke="#9a9448" />
      <path d="M5 7.500v8M1 11.500h8" stroke="#000" strokeWidth="2" />
    </svg>
  );
}

function TitleBar() {
  return (
    <header className="relative isolate flex h-[30px] justify-between overflow-hidden rounded-t-[6px] border-t-2 border-b border-t-[#2a1c20] border-b-[#4d443c]">
      <GlassBackdrop />
      <div className="flex items-center gap-[5px] pl-2 font-['Open_Sans','Noto_Sans',sans-serif] text-xs">
        <MatlabIcon />
        <h1>APL_TDA_v008d</h1>
      </div>
      <div className="mr-[7px] flex h-[18px] overflow-hidden rounded-b-[5px] border border-t-0 border-[#4b3f3c]">
        <button type="button" aria-label="Minimize" className="grid w-[28px] place-items-center border-r border-[#6b5a56] bg-linear-to-b from-[#d6c9c6] via-[#a4918c] via-50% to-[#bba9a2]">
          <svg viewBox="0 0 12 5" className="mt-1 h-[5px] w-3">
            <rect x=".5" y=".5" width="11" height="4" rx="1" fill="#fff" stroke="#555" />
          </svg>
        </button>
        <button type="button" aria-label="Maximize" className="grid w-[27px] place-items-center border-r border-[#6b5a56] bg-linear-to-b from-[#aaa09d] to-[#8c8683]">
          <svg viewBox="0 0 11 9" className="h-[9px] w-[11px]" fill="none">
            <rect x="1" y="1" width="9" height="7" stroke="#c8c4c2" strokeWidth="2" />
            <rect x="3.500" y="3.500" width="4" height="2" stroke="#77716f" />
          </svg>
        </button>
        <button type="button" aria-label="Close" className="grid w-[46px] place-items-center bg-linear-to-b from-[#e0a597] via-[#c23a22] via-50% to-[#d2603f]">
          <svg viewBox="0 0 12 10" className="h-[10px] w-3">
            <path d="M1 .5h3l2 2.200L8 .5h3v1L8 5l3 3.500v1H8L6 7.300 4 9.500H1v-1L4 5 1 1.500z" fill="#fff" stroke="#4b3c3c" strokeWidth=".9" />
          </svg>
        </button>
      </div>
    </header>
  );
}

const TOOLS = [
  { name: 'Zoom in', icon: <ZoomIcon plus /> },
  { name: 'Zoom out', icon: <ZoomIcon /> },
  { name: 'Pan', icon: <PanIcon /> },
  { name: 'Rotate 3D', icon: <RotateIcon /> },
  { name: 'Data cursor', icon: <CursorIcon /> },
];

const VIEWS = ['recorded', 'IR', 'IR Log', 'TDA 3D', 'TDA pl', 'AFR', 'DFR'];

function App() {
  const [view, setView] = useState('TDA 3D');

  return (
    <div className="flex min-h-screen flex-col bg-[#c9b0a6] font-['Liberation_Sans',Arial,sans-serif] text-[11px] leading-[14px] text-black">
      <TitleBar />

      <div className="flex flex-1 border-x border-[#33292b]">
        <div className="w-[7px] border-r border-[#5e5258] bg-linear-to-b from-[#b5a49c] from-0% via-[#14100f] via-30% to-[#c9b0a6] to-42%" />
        <main className="flex-1 border-b-2 border-b-[#5e5258] bg-[#f0f0f0]">
          <nav className="flex h-[26px] items-center gap-[6px] border-b border-[#a0a0a0] pl-[3px]">
            {TOOLS.map(({ name, icon }) => (
              <button key={name} type="button" aria-label={name}>
                {icon}
              </button>
            ))}
          </nav>

          <div className="flex border-t border-white">
            {/* left controls */}
            <div className="w-[350px] shrink-0">
              <Panel title="Avilable sound devices" className="mt-[2px] ml-[11px] h-[137px] w-[339px]">
                <DeviceList />
              </Panel>

              <div className="mt-[7px] flex items-start">
                <div className="w-[251px] pl-[5px]">
                  <div className="flex items-start">
                    <Panel title="Set in out ID" className="h-[78px] w-[167px]">
                      <div className="mt-[4px] mr-[15px] flex items-center justify-end gap-[10px]">
                        <label htmlFor="input-id">Input device ID</label>
                        <NumberBox id="input-id" value="-1" className="w-[51px]" />
                      </div>
                      <div className="mt-[6px] mr-[15px] flex items-center justify-end gap-1">
                        <label htmlFor="output-id">Output device ID</label>
                        <NumberBox id="output-id" value="-1" className="w-[51px]" />
                      </div>
                    </Panel>
                    <div className="mt-3 ml-3 flex flex-col gap-[3px]">
                      <span>Sample rate</span>
                      <DropDown label="Sample rate" options={['96000']} className="w-[60px]" />
                    </div>
                  </div>

                  <div className="mt-[11px] flex gap-[2px]">
                    <Panel title="Output" className="h-[58px] w-[157px]">
                      <div className="mt-[3px] ml-3 flex items-center">
                        <DropDown label="Output" options={['left']} className="w-[55px]" />
                        <label htmlFor="level" className="ml-[5px]">level</label>
                        <NumberBox id="level" value="-15" className="ml-2 w-[42px]" />
                      </div>
                    </Panel>
                    <Panel title="Input" className="h-[58px] w-[78px]">
                      <DropDown label="Input" options={['left']} className="mt-[2px] ml-3 w-[55px]" />
                    </Panel>
                  </div>

                  <button
                    type="button"
                    className="mt-[14px] ml-[14px] h-[100px] w-[211px] border-r-2 border-b-2 border-t border-l border-t-white border-l-white border-r-[#848484] border-b-[#848484] bg-[#00ff00] text-[13px] font-bold text-[#062806]"
                  >
                    RUN MEASUREMENT
                  </button>

                  <div className="mt-[8px] ml-[14px] flex items-start">
                    <Panel title="input level dB" className="h-[59px] w-[100px]">
                      <output className="mt-2 ml-[18px] block h-[25px] w-[63px] border-b border-l border-black bg-[#ffffb0] pl-2 text-[13px] leading-[24px] font-bold text-[#064806]">
                        -19.67
                      </output>
                    </Panel>
                    <div className="mt-[15px] ml-[41px] flex w-[57px] flex-col">
                      <PushButton label="imp IR" />
                      <PushButton label="imp rec" className="mt-[16px]" />
                      <PushButton label="save IR" className="mt-6" />
                      <PushButton label="save data" className="mt-[21px]" />
                    </div>
                  </div>
                </div>

                <div className="pt-[3px]">
                  <Panel title="display" className="h-[344px] w-[77px]">
                    <div className="mt-[8px] ml-[11px] flex w-[57px] flex-col gap-5">
                      {VIEWS.map((name) => (
                        <PushButton
                          key={name}
                          label={name}
                          active={name === view}
                          onClick={() => setView(name)}
                          className="last:mt-[5px]"
                        />
                      ))}
                    </div>
                    <label className="mt-[11px] ml-[18px] flex items-center gap-1">
                      <input type="checkbox" className="h-[13px] w-[13px] appearance-none border border-[#8e8f8f] bg-linear-to-br from-[#b4b9c0] to-[#f6f6f6] shadow-[inset_0_0_0_2px_#f4f4f4]" />
                      SW
                    </label>
                  </Panel>
                  <Panel title="time span, ms" className="mt-[7px] h-[42px] w-[82px]">
                    <NumberBox id="time-span" label="time span, ms" value="30" className="ml-4 w-[42px]" />
                  </Panel>
                  <Panel title="time zero, ms" className="mt-[4px] h-[42px] w-[82px]">
                    <NumberBox id="time-zero" label="time zero, ms" value="0" className="ml-4 w-[42px]" />
                  </Panel>
                </div>
              </div>
            </div>

            {/* plot */}
            <div className="min-w-0 flex-1">
              <SurfacePlot />
              <div className="mt-[3px] ml-6 flex items-start">
                <Panel title="first graph to show" className="h-[43px] w-[113px]">
                  <DropDown label="first graph to show" options={['TDA 3D']} className="ml-[14px] w-[88px]" />
                </Panel>
                <PushButton label="Show graphs" className="mt-[13px] ml-9 w-[102px]" />
                <PushButton label="Close graphs" className="mt-[13px] ml-[10px] w-[102px]" />
              </div>
            </div>
          </div>
        </main>
        <div className="w-[7px] border-l border-[#5e5258] bg-linear-to-b from-[#d6c8be] from-24% to-[#b9a99c] to-25%" />
      </div>
      <div className="h-[8px] border-x border-b-2 border-[#2a1c20] bg-linear-to-r from-[#b59c9c] via-[#cdb5a8] to-[#c4aca0]" />
    </div>
  );
}

export default App;
